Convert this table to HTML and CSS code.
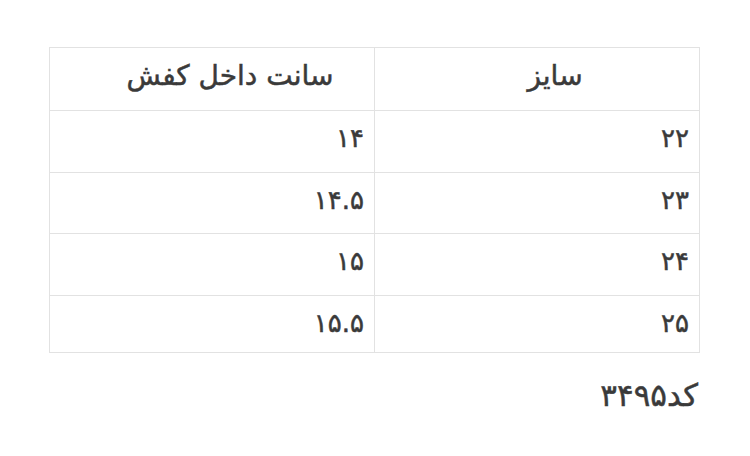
FILE: index.html
```html
<!DOCTYPE html>
<html lang="fa" dir="rtl">
<head>
<meta charset="utf-8">
<link rel="stylesheet" href="styles.css">
</head>
<body>
<div class="page">
  <table class="sizes">
    <thead>
      <tr><th class="c1">سایز</th><th class="c2">سانت داخل کفش</th></tr>
    </thead>
    <tbody>
      <tr><td>۲۲</td><td>۱۴</td></tr>
      <tr><td>۲۳</td><td>۱۴.۵</td></tr>
      <tr><td>۲۴</td><td>۱۵</td></tr>
      <tr class="last"><td>۲۵</td><td>۱۵.۵</td></tr>
    </tbody>
  </table>
  <p class="code">کد۳۴۹۵</p>
</div>
</body>
</html>
```
FILE: styles.css
```css
html, body { margin: 0; padding: 0; background: #fff; }
body { font-family: "DejaVu Sans", "Noto Sans", sans-serif; color: #3a3a3a; -webkit-text-stroke: 0.5px #3a3a3a; }
.page { padding: 47px 50px 0 49px; }
.sizes { width: 651px; border-collapse: collapse; table-layout: fixed; }
.sizes th, .sizes td { border: 1px solid #e2e2e2; box-sizing: border-box; }
.sizes th { height: 63px; font-weight: normal; font-size: 28px; line-height: 1; text-align: center; padding: 0 0 6px 36px; }
.sizes td { height: 61.5px; font-size: 26px; line-height: 1; text-align: right; padding: 0 10px 6px 10px; }
.sizes tr.last td { height: 57px; padding-bottom: 2px; }
.sizes .c1 { width: 325px; }
.code { margin: 24px 2px 0 0; font-size: 31px; line-height: 1.2; }
```
